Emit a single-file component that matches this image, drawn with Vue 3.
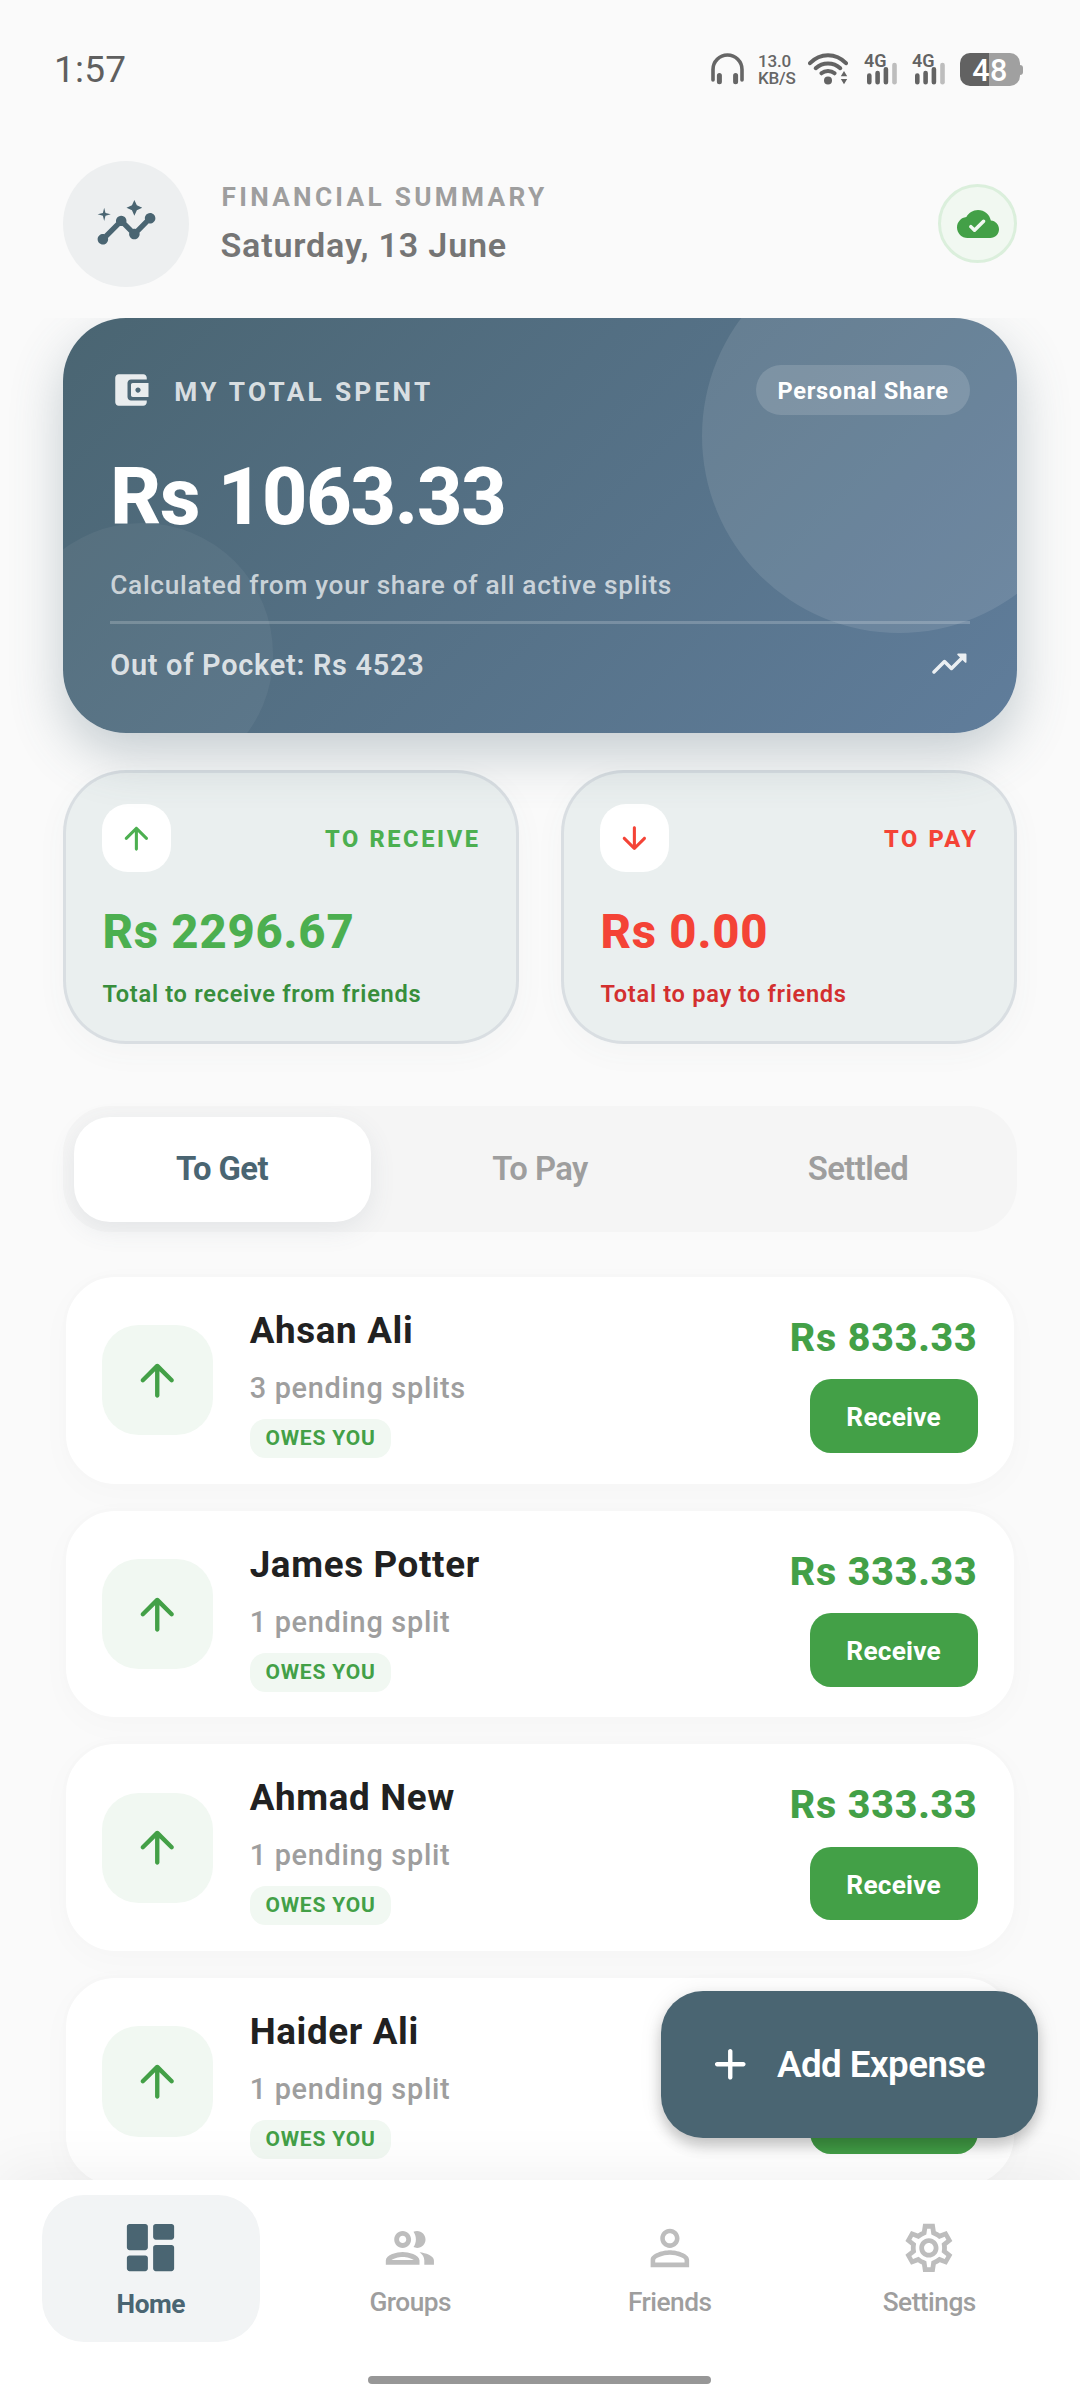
<script setup>
import { ref } from 'vue'

const icons = {
  insights:
    'M21 8c-1.45 0-2.26 1.44-1.93 2.51l-3.55 3.56c-.3-.09-.74-.09-1.04 0l-2.55-2.55C12.27 10.45 11.46 9 10 9c-1.45 0-2.27 1.44-1.93 2.52l-4.56 4.55C2.44 15.74 1 16.55 1 18c0 1.1.9 2 2 2 1.45 0 2.26-1.44 1.93-2.51l4.55-4.56c.3.09.74.09 1.04 0l2.55 2.55C12.73 16.55 13.54 18 15 18c1.45 0 2.27-1.44 1.93-2.52l3.56-3.55c1.07.33 2.51-.48 2.51-1.93 0-1.1-.9-2-2-2zM15 9l.94-2.07L18 6l-2.06-.93L15 3l-.92 2.07L12 6l2.08.93zM3.5 11L4 9l2-.5L4 8l-.5-2L3 8l-2 .5L3 9z',
  cloudDone:
    'M19.35 10.04C18.67 6.59 15.64 4 12 4 9.11 4 6.6 5.64 5.35 8.04 2.34 8.36 0 10.91 0 14c0 3.31 2.69 6 6 6h13c2.76 0 5-2.24 5-5 0-2.64-2.05-4.78-4.65-4.96zm-8.64 6.25c-.39.39-1.02.39-1.41 0L7.2 14.2c-.39-.39-.39-1.02 0-1.41.39-.39 1.02-.39 1.41 0L10 14.18l4.48-4.48c.39-.39 1.02-.39 1.41 0 .39.39.39 1.02 0 1.41l-5.18 5.18z',
  wallet:
    'M10 16V8c0-1.1.9-2 2-2h9V5c0-1.1-.9-2-2-2H5c-1.11 0-2 .9-2 2v14c0 1.1.89 2 2 2h14c1.1 0 2-.9 2-2v-1h-9c-1.1 0-2-.9-2-2zm3-8c-.55 0-1 .45-1 1v6c0 .55.45 1 1 1h9V8h-9zm3 5.5c-.83 0-1.5-.67-1.5-1.5s.67-1.5 1.5-1.5 1.5.67 1.5 1.5-.67 1.5-1.5 1.5z',
  trendingUp:
    'M16.85 6.85l1.44 1.44-4.88 4.88-3.29-3.29c-.39-.39-1.02-.39-1.41 0l-6 6.01c-.39.39-.39 1.02 0 1.41.39.39 1.02.39 1.41 0L9.41 12l3.29 3.29c.39.39 1.02.39 1.41 0l5.59-5.58 1.44 1.44c.31.31.85.09.85-.35V6.5c.01-.28-.21-.5-.49-.5h-4.29c-.45 0-.67.54-.36.85z',
  arrowUp:
    'M13 19V7.83l4.88 4.88c.39.39 1.03.39 1.42 0 .39-.39.39-1.02 0-1.41l-6.59-6.59c-.39-.39-1.02-.39-1.41 0l-6.6 6.58c-.39.39-.39 1.02 0 1.41.39.39 1.02.39 1.41 0L11 7.83V19c0 .55.45 1 1 1s1-.45 1-1z',
  arrowDown:
    'M11 5v11.17l-4.88-4.88c-.39-.39-1.03-.39-1.42 0-.39.39-.39 1.02 0 1.41l6.59 6.59c.39.39 1.02.39 1.41 0l6.59-6.59c.39-.39.39-1.02 0-1.41-.39-.39-1.02-.39-1.41 0L13 16.17V5c0-.55-.45-1-1-1s-1 .45-1 1z',
  add:
    'M18 13h-5v5c0 .55-.45 1-1 1s-1-.45-1-1v-5H6c-.55 0-1-.45-1-1s.45-1 1-1h5V6c0-.55.45-1 1-1s1 .45 1 1v5h5c.55 0 1 .45 1 1s-.45 1-1 1z',
  dashboard:
    'M4 13h6c.55 0 1-.45 1-1V4c0-.55-.45-1-1-1H4c-.55 0-1 .45-1 1v8c0 .55.45 1 1 1zm0 8h6c.55 0 1-.45 1-1v-4c0-.55-.45-1-1-1H4c-.55 0-1 .45-1 1v4c0 .55.45 1 1 1zm10 0h6c.55 0 1-.45 1-1v-8c0-.55-.45-1-1-1h-6c-.55 0-1 .45-1 1v8c0 .55.45 1 1 1zM13 4v4c0 .55.45 1 1 1h6c.55 0 1-.45 1-1V4c0-.55-.45-1-1-1h-6c-.55 0-1 .45-1 1z',
  group:
    'M9 13.75c-2.34 0-7 1.17-7 3.5V19h14v-1.75c0-2.33-4.66-3.5-7-3.5zM4.34 17c.84-.58 2.87-1.25 4.66-1.25s3.82.67 4.66 1.25H4.34zM9 12c1.93 0 3.5-1.57 3.5-3.5S10.93 5 9 5 5.5 6.57 5.5 8.5 7.07 12 9 12zm0-5c.83 0 1.5.67 1.5 1.5S9.83 10 9 10s-1.5-.67-1.5-1.5S8.17 7 9 7zm7.04 6.81c1.16.84 1.96 1.96 1.96 3.44V19h4v-1.75c0-2.02-3.5-3.17-5.96-3.44zM15 12c1.93 0 3.5-1.57 3.5-3.5S16.93 5 15 5c-.54 0-1.04.13-1.5.35.63.89 1 1.98 1 3.15s-.37 2.26-1 3.15c.46.22.96.35 1.5.35z',
  person:
    'M12 5.9c1.16 0 2.1.94 2.1 2.1s-.94 2.1-2.1 2.1S9.9 9.16 9.9 8s.94-2.1 2.1-2.1m0 9c2.97 0 6.1 1.46 6.1 2.1v1.1H5.9V17c0-.64 3.13-2.1 6.1-2.1M12 4C9.79 4 8 5.79 8 8s1.79 4 4 4 4-1.79 4-4-1.79-4-4-4zm0 9c-2.67 0-8 1.34-8 4v3h16v-3c0-2.66-5.33-4-8-4z',
  settings:
    'M19.43 12.98c.04-.32.07-.64.07-.98s-.03-.66-.07-.98L21.75 9.15 19.4 4.95 16.56 6.05c-.52-.4-1.08-.73-1.69-.98L14.4 2H9.6L9.13 5.07c-.61.25-1.17.59-1.69.98L4.6 4.95 2.25 9.15l2.32 1.87c-.04.32-.07.65-.07.98s.03.66.07.98L2.25 14.85 4.6 19.05l2.84-1.1c.52.4 1.08.73 1.69.98L9.6 22h4.8l.47-3.07c.61-.25 1.17-.59 1.69-.98l2.84 1.1 2.35-4.2zm-1.98-1.71c.04.31.05.52.05.73 0 .21-.02.43-.05.73l-.14 1.13.89.7 1.08.84-.7 1.21-1.27-.51-1.04-.42-.9.68c-.43.32-.84.56-1.25.73l-1.06.43-.16 1.13-.2 1.35h-1.4l-.19-1.35-.16-1.13-1.06-.43c-.43-.18-.83-.41-1.23-.71l-.91-.7-1.06.43-1.27.51-.7-1.21 1.08-.84.89-.7-.14-1.13c-.03-.31-.05-.54-.05-.74s.02-.43.05-.73l.14-1.13-.89-.7-1.08-.84.7-1.21 1.27.51 1.04.42.9-.68c.43-.32.84-.56 1.25-.73l1.06-.43.16-1.13.2-1.35h1.39l.19 1.35.16 1.13 1.06.43c.43.18.83.41 1.23.71l.91.7 1.06-.43 1.27-.51.7 1.21-1.07.85-.89.7.14 1.13zM12 8c-2.21 0-4 1.79-4 4s1.79 4 4 4 4-1.79 4-4-1.79-4-4-4zm0 6c-1.1 0-2-.9-2-2s.9-2 2-2 2 .9 2 2-.9 2-2 2z'
}

const stats = [
  { kind: 'receive', icon: icons.arrowUp, label: 'TO RECEIVE', amount: 'Rs 2296.67', note: 'Total to receive from friends' },
  { kind: 'pay', icon: icons.arrowDown, label: 'TO PAY', amount: 'Rs 0.00', note: 'Total to pay to friends' }
]

const tabs = ['To Get', 'To Pay', 'Settled']
const activeTab = ref('To Get')

const friends = [
  { name: 'Ahsan Ali', splits: '3 pending splits', amount: 'Rs 833.33' },
  { name: 'James Potter', splits: '1 pending split', amount: 'Rs 333.33' },
  { name: 'Ahmad New', splits: '1 pending split', amount: 'Rs 333.33' },
  { name: 'Haider Ali', splits: '1 pending split', amount: '' }
]

const navItems = [
  { label: 'Home', icon: icons.dashboard },
  { label: 'Groups', icon: icons.group },
  { label: 'Friends', icon: icons.person },
  { label: 'Settings', icon: icons.settings }
]
const activeNav = ref('Home')
</script>

<template>
  <div class="screen">
    <div class="status">
      <span class="clock">1:57</span>
      <div class="status-icons">
        <svg class="headphones" viewBox="0 0 33 32" fill="none" stroke="#666" stroke-linecap="round">
          <path d="M2 27V16.5a14.5 14.5 0 0 1 29 0V27" stroke-width="3.6" />
          <path d="M8.4 22.5v6.3M24.6 22.5v6.3" stroke-width="5" />
        </svg>
        <div class="speed"><span>13.0</span><span>KB/S</span></div>
        <svg class="wifi" viewBox="0 0 40 32" fill="none" stroke="#636363" stroke-linecap="round">
          <path d="M2 10.2C12.2-.4 27.8-.4 38 10.2" stroke-width="4" />
          <path d="M7.7 15.2c6.9-6.4 17.7-6.4 24.6 0" stroke-width="4" />
          <path d="M13.4 20.3c3.7-3.2 9.5-3.2 13.2 0" stroke-width="4" />
          <circle cx="20" cy="27.5" r="4" fill="#636363" stroke="none" />
          <path d="M36 18l3.2 5.2h-6.4zM36 31.2l3.2-5.2h-6.4z" fill="#636363" stroke="none" />
        </svg>
        <div v-for="n in 2" :key="n" class="signal">
          <span>4G</span>
          <svg viewBox="0 0 30 20" stroke-width="4.6" stroke-linecap="round">
            <path d="M2.3 10.5v6.7M10.6 8v9.2M18.9 4.2v13" stroke="#636363" />
            <path d="M27.5 0v17.2" stroke="#bdbdbd" />
          </svg>
        </div>
        <div class="battery"><div class="battery-body">48</div><div class="battery-tip"></div></div>
      </div>
    </div>

    <header class="header">
      <div class="avatar"><svg viewBox="0 0 24 24"><path :d="icons.insights" /></svg></div>
      <div class="header-text">
        <div class="eyebrow">FINANCIAL SUMMARY</div>
        <div class="date">Saturday, 13 June</div>
      </div>
      <div class="sync"><svg viewBox="0 0 24 24"><path :d="icons.cloudDone" /></svg></div>
    </header>

    <main class="content">
      <section class="hero">
        <div class="hero-clip"><i class="orb orb-big"></i><i class="orb orb-small"></i></div>
        <div class="hero-inner">
          <div class="hero-top">
            <svg viewBox="0 0 24 24"><path :d="icons.wallet" /></svg>
            <span class="hero-title">MY TOTAL SPENT</span>
            <span class="pill">Personal Share</span>
          </div>
          <div class="hero-amount">Rs 1063.33</div>
          <div class="hero-note">Calculated from your share of all active splits</div>
          <div class="divider"></div>
          <div class="hero-bottom">
            <span>Out of Pocket: Rs 4523</span>
            <svg viewBox="0 0 24 24"><path :d="icons.trendingUp" /></svg>
          </div>
        </div>
      </section>

      <section class="stats">
        <div v-for="s in stats" :key="s.kind" class="stat" :class="s.kind">
          <div class="stat-top">
            <div class="stat-icon"><svg viewBox="0 0 24 24"><path :d="s.icon" /></svg></div>
            <span class="stat-label">{{ s.label }}</span>
          </div>
          <div class="stat-amount">{{ s.amount }}</div>
          <div class="stat-note">{{ s.note }}</div>
        </div>
      </section>

      <nav class="tabs">
        <div v-for="t in tabs" :key="t" class="tab" :class="{ active: t === activeTab }" @click="activeTab = t">
          <span>{{ t }}</span>
        </div>
      </nav>

      <section class="list">
        <article v-for="f in friends" :key="f.name" class="row">
          <div class="row-icon"><svg viewBox="0 0 24 24"><path :d="icons.arrowUp" /></svg></div>
          <div class="row-text">
            <div class="row-name">{{ f.name }}</div>
            <div class="row-sub">{{ f.splits }}</div>
            <span class="chip">OWES YOU</span>
          </div>
          <div class="row-side">
            <div class="row-amount">{{ f.amount }}</div>
            <button class="receive-btn">Receive</button>
          </div>
        </article>
      </section>
    </main>

    <button class="fab">
      <svg viewBox="0 0 24 24"><path :d="icons.add" /></svg>
      <span>Add Expense</span>
    </button>

    <footer class="bottom">
      <div class="nav">
        <div v-for="n in navItems" :key="n.label" class="nav-item" :class="{ active: n.label === activeNav }" @click="activeNav = n.label">
          <div class="nav-box">
            <div class="nav-icon"><svg viewBox="0 0 24 24"><path :d="n.icon" /></svg></div>
            <span>{{ n.label }}</span>
          </div>
        </div>
      </div>
      <div class="handle"></div>
    </footer>
  </div>
</template>

<style>
body {
  margin: 0;
  background: #fafafa;
}
</style>

<style scoped>
.screen {
  position: relative;
  display: flex;
  flex-direction: column;
  width: 1080px;
  height: 2400px;
  overflow: hidden;
  background: #fafafa;
  font-family: Roboto, sans-serif;
  box-sizing: border-box;
}
.screen * {
  box-sizing: border-box;
}
svg {
  display: block;
  flex: none;
}
button {
  border: 0;
  padding: 0;
  font-family: inherit;
}
span,
.screen div {
  white-space: nowrap;
}

/* status bar */
.status {
  display: flex;
  flex: none;
  justify-content: space-between;
  height: 160.5px;
  padding: 53px 57px 0 54px;
}
.clock {
  height: 32px;
  line-height: 34px;
  font-size: 37px;
  letter-spacing: 0.2px;
  color: #5f5f5f;
}
.status-icons {
  display: flex;
  align-items: flex-start;
  height: 34px;
}
.headphones {
  width: 33px;
  height: 32px;
  margin-right: 14px;
}
.speed {
  display: flex;
  flex-direction: column;
  width: 36px;
  margin-right: 14px;
  font-size: 17px;
  font-weight: 500;
  line-height: 17px;
  letter-spacing: -0.2px;
  color: #666;
}
.wifi {
  width: 40px;
  height: 32px;
  margin-right: 16px;
}
.signal {
  display: flex;
  flex-direction: column;
  width: 33px;
  height: 32px;
  margin-right: 15px;
}
.signal span {
  height: 15px;
  line-height: 15px;
  font-size: 18px;
  font-weight: 600;
  color: #636363;
}
.signal svg {
  width: 30px;
  height: 20px;
  margin: -3px 0 0 3px;
  overflow: visible;
}
.battery {
  display: flex;
  align-items: center;
}
.battery-body {
  width: 60px;
  height: 33px;
  border-radius: 10px;
  background: linear-gradient(90deg, #626262 29px, #a0a0a0 29px);
  color: #fff;
  font-size: 30.5px;
  font-weight: 500;
  letter-spacing: 0.5px;
  line-height: 35px;
  text-align: center;
}
.battery-tip {
  width: 3px;
  height: 10px;
  border-radius: 0 3px 3px 0;
  background: #a0a0a0;
}

/* header */
.header {
  display: flex;
  flex: none;
  align-items: center;
  height: 126px;
  margin-bottom: 31.5px;
  padding: 0 63px;
}
.avatar {
  display: flex;
  align-items: center;
  justify-content: center;
  width: 126px;
  height: 126px;
  margin-right: 31.5px;
  border-radius: 50%;
  background: #edeff0;
}
.avatar svg {
  width: 63px;
  height: 63px;
  fill: #4a6572;
}
.header-text {
  flex: 1;
  margin-top: -2px;
}
.eyebrow {
  height: 32px;
  line-height: 32px;
  margin-bottom: 12px;
  padding-left: 1px;
  font-size: 26.25px;
  font-weight: 700;
  letter-spacing: 3.28px;
  color: #9e9e9e;
}
.date {
  height: 40px;
  line-height: 40px;
  font-size: 34.125px;
  font-weight: 600;
  letter-spacing: 0.8px;
  color: #757575;
}
.sync {
  display: flex;
  align-items: center;
  justify-content: center;
  width: 79px;
  height: 79px;
  border: 3px solid #dbefdc;
  border-radius: 50%;
  background: #f1f8f1;
}
.sync svg {
  width: 42px;
  height: 42px;
  fill: #43a047;
}

/* content */
.content {
  flex: 1;
  min-height: 0;
  overflow: hidden;
  padding: 0 63px;
}
.hero {
  position: relative;
  height: 415px;
  margin-bottom: 36.5px;
  border-radius: 63px;
  background: linear-gradient(135deg, #4a6572 0%, #607d9b 100%);
  box-shadow: 0 21px 52px rgba(74, 101, 114, 0.3);
}
.hero-clip {
  position: absolute;
  inset: 0;
  border-radius: 63px;
  overflow: hidden;
}
.orb {
  position: absolute;
  border-radius: 50%;
}
.orb-big {
  top: -79px;
  right: -79px;
  width: 394px;
  height: 394px;
  background: rgba(255, 255, 255, 0.1);
}
.orb-small {
  bottom: -52.5px;
  left: -52.5px;
  width: 262.5px;
  height: 262.5px;
  background: rgba(255, 255, 255, 0.05);
}
.hero-inner {
  position: relative;
  padding: 47px 47.25px;
}
.hero-top {
  display: flex;
  align-items: center;
  height: 50px;
}
.hero-top svg,
.hero-bottom svg {
  width: 42px;
  height: 42px;
  fill: rgba(255, 255, 255, 0.88);
}
.hero-title {
  flex: 1;
  margin-left: 22px;
  padding-top: 4px;
  font-size: 26.25px;
  font-weight: 700;
  letter-spacing: 3.28px;
  color: rgba(255, 255, 255, 0.8);
}
.pill {
  height: 50px;
  padding: 0 21px;
  border-radius: 26px;
  background: rgba(255, 255, 255, 0.15);
  color: #fff;
  font-size: 23.625px;
  font-weight: 700;
  letter-spacing: 0.7px;
  line-height: 52px;
}
.hero-amount {
  height: 92px;
  margin-top: 36px;
  color: #fff;
  font-size: 78.75px;
  font-weight: 800;
  letter-spacing: -1.15px;
  line-height: 93px;
}
.hero-note {
  height: 31px;
  margin: 26.5px 0 20.5px;
  color: rgba(255, 255, 255, 0.7);
  font-size: 26.25px;
  font-weight: 500;
  letter-spacing: 0.7px;
  line-height: 31px;
}
.divider {
  height: 2.6px;
  background: rgba(255, 255, 255, 0.2);
}
.hero-bottom {
  display: flex;
  align-items: center;
  justify-content: space-between;
  height: 42px;
  margin-top: 19.9px;
  color: rgba(255, 255, 255, 0.8);
  font-size: 28.875px;
  font-weight: 600;
  letter-spacing: 0.74px;
}
.hero-bottom span {
  padding-top: 1px;
}

.stats {
  display: flex;
  gap: 42px;
  margin-bottom: 62px;
}
.stat {
  flex: 1;
  height: 274.5px;
  padding: 31.5px 36.4px 0;
  border: 3px solid rgba(74, 80, 114, 0.11);
  border-radius: 63px;
  background: rgba(68, 128, 124, 0.085);
  box-shadow: 0 8px 32px rgba(74, 101, 114, 0.04);
}
.stat-top {
  display: flex;
  align-items: center;
  justify-content: space-between;
}
.stat-icon {
  display: flex;
  align-items: center;
  justify-content: center;
  width: 68.25px;
  height: 68.25px;
  border-radius: 26px;
  background: #fff;
}
.stat-icon svg {
  width: 36.75px;
  height: 36.75px;
  fill: currentColor;
}
.receive {
  color: #4caf50;
}
.pay {
  color: #f44336;
}
.stat-label {
  margin-right: -1px;
  padding-top: 2px;
  font-size: 23.625px;
  font-weight: 800;
  letter-spacing: 2.6px;
}
.stat-amount {
  height: 58px;
  margin-top: 31px;
  font-size: 47.25px;
  font-weight: 800;
  letter-spacing: 0.8px;
  line-height: 58px;
}
.stat-note {
  height: 28px;
  margin-top: 18.8px;
  font-size: 23.625px;
  font-weight: 600;
  letter-spacing: 0.7px;
  line-height: 28px;
}
.receive .stat-note {
  color: #388e3c;
}
.pay .stat-note {
  color: #d32f2f;
}

.tabs {
  display: flex;
  height: 126px;
  margin-bottom: 42px;
  border-radius: 47px;
  background: #f5f5f5;
}
.tab {
  flex: 1;
  padding: 10.5px;
  color: #9e9e9e;
  font-size: 32.8px;
  font-weight: 600;
  letter-spacing: -0.55px;
}
.tab span {
  display: block;
  height: 105px;
  line-height: 105px;
  border-radius: 36px;
  text-align: center;
}
.tab.active {
  color: #4a6572;
  font-weight: 700;
}
.tab.active span {
  background: #fff;
  box-shadow: 0 8px 26px rgba(74, 101, 114, 0.1);
}

.list {
  display: flex;
  flex-direction: column;
  gap: 21px;
}
.row {
  display: flex;
  flex: none;
  align-items: center;
  height: 212.7px;
  padding: 0 36.4px;
  border: 3px solid #f7f7f7;
  border-radius: 52.5px;
  background: #fff;
  box-shadow: 0 8px 32px rgba(0, 0, 0, 0.02);
}
.row-icon {
  display: flex;
  align-items: center;
  justify-content: center;
  width: 110.25px;
  height: 110.25px;
  margin-right: 37px;
  border-radius: 36.75px;
  background: #f1f8f2;
}
.row-icon svg {
  width: 52.5px;
  height: 52.5px;
  fill: #43a047;
}
.row-text {
  display: flex;
  flex: 1;
  flex-direction: column;
  align-items: flex-start;
  height: 156px;
}
.row-name {
  height: 43px;
  margin-top: 6.5px;
  color: #212121;
  font-size: 36.75px;
  font-weight: 700;
  letter-spacing: 0.66px;
  line-height: 43px;
}
.row-sub {
  height: 34px;
  margin: 19px 0 14px;
  color: #9e9e9e;
  font-size: 28.875px;
  font-weight: 500;
  letter-spacing: 0.72px;
  line-height: 34px;
}
.chip {
  height: 39px;
  padding: 0 15.75px;
  border-radius: 15.75px;
  background: #f1f8f2;
  color: #43a047;
  font-size: 21px;
  font-weight: 700;
  letter-spacing: 0.8px;
  line-height: 38px;
}
.row-side {
  display: flex;
  flex-direction: column;
  align-items: flex-end;
  height: 156px;
}
.row-amount {
  height: 46px;
  margin: 12.5px 0 18.5px;
  color: #43a047;
  font-size: 39.375px;
  font-weight: 800;
  letter-spacing: 0.8px;
  line-height: 46px;
}
.receive-btn {
  width: 168px;
  height: 73.5px;
  border-radius: 21px;
  background: #43a047;
  color: #fff;
  font-size: 26.25px;
  font-weight: 700;
  letter-spacing: 0.2px;
  line-height: 77px;
}

/* floating button rests above the list */
.fab {
  position: absolute;
  right: 42px;
  bottom: 262.5px;
  display: flex;
  align-items: center;
  width: 377px;
  height: 147px;
  padding-left: 42.5px;
  border-radius: 42px;
  background: #4a6572;
  color: #fff;
  box-shadow: 0 8px 14px rgba(0, 0, 0, 0.2), 0 2px 24px rgba(0, 0, 0, 0.08);
}
.fab svg {
  width: 52.5px;
  height: 52.5px;
  margin-right: 21px;
  fill: #fff;
}
.fab span {
  font-size: 36.75px;
  font-weight: 600;
  letter-spacing: -0.55px;
}

/* bottom navigation */
.bottom {
  flex: none;
  height: 220.5px;
  padding: 15.75px 21px 0;
  background: #fff;
  box-shadow: 0 -10px 52px rgba(0, 0, 0, 0.05);
}
.nav {
  display: flex;
  height: 147px;
}
.nav-item {
  flex: 1;
  padding: 0 21px;
  color: #9e9e9e;
}
.nav-box {
  display: flex;
  flex-direction: column;
  align-items: center;
  height: 147px;
  border-radius: 42px;
}
.nav-icon {
  display: flex;
  align-items: center;
  justify-content: center;
  height: 63px;
  margin: 21px 0 8px;
}
.nav-icon svg {
  width: 57.75px;
  height: 57.75px;
  fill: #bdbdbd;
}
.nav-box span {
  height: 31px;
  font-size: 26.25px;
  font-weight: 500;
  letter-spacing: -0.5px;
  line-height: 31px;
}
.active .nav-box {
  background: #f2f4f5;
  color: #4a6572;
}
.active .nav-icon svg {
  width: 63px;
  height: 63px;
  fill: #4a6572;
}
.active .nav-icon {
  margin-bottom: 10px;
}
.active .nav-box span {
  font-weight: 700;
}
.handle {
  width: 343px;
  height: 8px;
  margin: 33.5px 0 0 347px;
  border-radius: 4px;
  background: #979797;
}
</style>
